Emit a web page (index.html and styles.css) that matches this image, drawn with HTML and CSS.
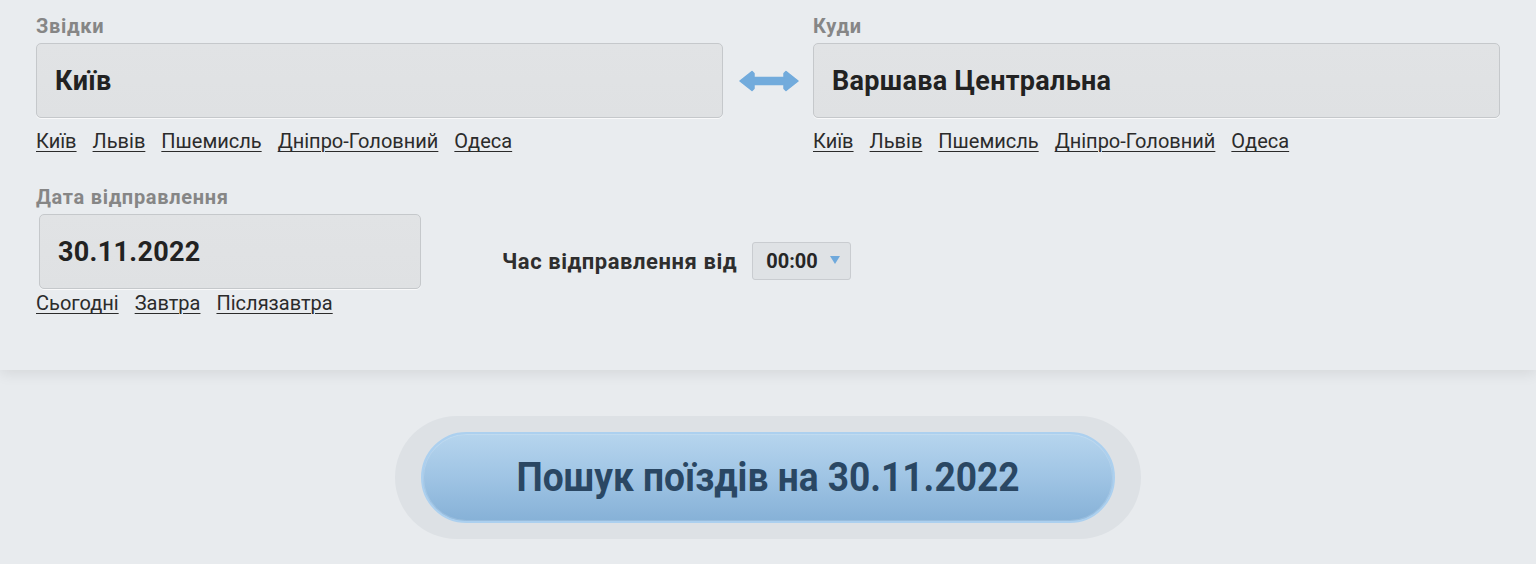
FILE: index.html
```html
<!DOCTYPE html>
<html lang="uk">
<head>
<meta charset="utf-8">
<title>Пошук поїздів</title>
<link rel="stylesheet" href="styles.css">
</head>
<body>
<section class="panel">
  <div class="route">
    <div class="field">
      <div class="label">Звідки</div>
      <div class="input">Київ</div>
      <div class="links">
        <a href="#">Київ</a><a href="#">Львів</a><a href="#">Пшемисль</a><a href="#">Дніпро-Головний</a><a href="#">Одеса</a>
      </div>
    </div>
    <div class="swap">
      <svg width="60" height="22" viewBox="0 0 60 22" aria-hidden="true">
        <path d="M1 11 L13 1.5 L15 3.5 L15 7.5 L45 7.5 L45 3.5 L47 1.5 L59 11 L47 20.5 L45 18.5 L45 14.5 L15 14.5 L15 18.5 L13 20.5 Z" fill="#72abdc" stroke="#72abdc" stroke-width="1.5" stroke-linejoin="round"/>
      </svg>
    </div>
    <div class="field">
      <div class="label">Куди</div>
      <div class="input">Варшава Центральна</div>
      <div class="links">
        <a href="#">Київ</a><a href="#">Львів</a><a href="#">Пшемисль</a><a href="#">Дніпро-Головний</a><a href="#">Одеса</a>
      </div>
    </div>
  </div>
  <div class="when">
    <div class="date-field">
      <div class="label">Дата відправлення</div>
      <div class="input date-input">30.11.2022</div>
      <div class="links date-links">
        <a href="#">Сьогодні</a><a href="#">Завтра</a><a href="#">Післязавтра</a>
      </div>
    </div>
    <div class="time">
      <span class="time-label">Час відправлення від</span>
      <div class="select">00:00<span class="caret"></span></div>
    </div>
  </div>
</section>
<div class="search-wrap">
  <div class="search-ring">
    <button class="search-btn"><span>Пошук поїздів на 30.11.2022</span></button>
  </div>
</div>
</body>
</html>
```
FILE: styles.css
```css
html, body {
  margin: 0;
  padding: 0;
}
body {
  background: #e8ebee;
  font-family: Roboto, "Liberation Sans", Arial, sans-serif;
  color: #2a2a2a;
  height: 564px;
  overflow: hidden;
}
.panel {
  background: #e9ecef;
  height: 370px;
  box-sizing: border-box;
  padding: 15px 36px 0 36px;
  box-shadow: 0 3px 14px rgba(0, 0, 0, 0.09);
  position: relative;
  z-index: 1;
}
.route {
  display: grid;
  grid-template-columns: 1fr 90px 1fr;
}
.label {
  font-size: 20px;
  font-weight: 700;
  color: #868686;
  line-height: 22px;
  margin-bottom: 6px;
  letter-spacing: 0.7px;
}
.input {
  height: 75px;
  box-sizing: border-box;
  border: 1px solid #c5c8cb;
  border-radius: 5px;
  background: linear-gradient(180deg, #e1e3e5, #dfe1e3);
  display: flex;
  align-items: center;
  padding-left: 18px;
  font-size: 27px;
  font-weight: 700;
  letter-spacing: 0.3px;
  color: #222;
  box-shadow: 0 1px 0 rgba(255, 255, 255, 0.7);
}
.links {
  display: flex;
  gap: 16px;
  margin-top: 11px;
  font-size: 20px;
  line-height: 24px;
}
.links a {
  color: #2b2b2b;
  text-decoration: underline;
  text-underline-offset: 3px;
  text-decoration-thickness: 1px;
}
.swap {
  display: flex;
  justify-content: center;
  padding-top: 55px;
}
.swap svg {
  display: block;
  margin-left: 2px;
}
.when {
  display: flex;
  align-items: flex-start;
  margin-top: 33px;
}
.date-field {
  width: 384px;
}
.date-input {
  margin-left: 3px;
  width: 382px;
}
.date-links {
  margin-top: 2px;
}
.time {
  display: flex;
  align-items: center;
  margin-left: 82px;
  margin-top: 56px;
}
.time-label {
  font-size: 22px;
  font-weight: 700;
  color: #2e2e2e;
  letter-spacing: 0.55px;
}
.select {
  margin-left: 15px;
  width: 99px;
  height: 38px;
  box-sizing: border-box;
  border: 1px solid #c9ccd0;
  border-radius: 3px;
  background: #dfe2e5;
  display: flex;
  align-items: center;
  padding-left: 13px;
  font-size: 20px;
  font-weight: 700;
  color: #262626;
}
.caret {
  width: 0;
  height: 0;
  border-left: 5px solid transparent;
  border-right: 5px solid transparent;
  border-top: 8px solid #6fa9dc;
  margin-left: 12px;
  margin-top: -2px;
}
.search-wrap {
  display: flex;
  justify-content: center;
  padding-top: 46px;
}
.search-ring {
  width: 746px;
  height: 123px;
  box-sizing: border-box;
  border-radius: 62px;
  background: #dde1e5;
  padding: 16px 26px;
}
.search-btn {
  width: 100%;
  height: 91px;
  border-radius: 46px;
  border: 2px solid #acd0ef;
  background: linear-gradient(180deg, #b6d5ee 0%, #9fc4e4 50%, #86b1d7 100%);
  display: flex;
  align-items: center;
  justify-content: center;
  padding: 0;
  cursor: pointer;
  box-shadow: inset 0 0 0 1px rgba(255, 255, 255, 0.15);
}
.search-btn span {
  display: inline-block;
  font-family: Roboto, "Liberation Sans", Arial, sans-serif;
  font-size: 41px;
  font-weight: 700;
  color: #2a4763;
  transform: scaleX(0.905);
  white-space: nowrap;
  margin-top: -2px;
}
```
